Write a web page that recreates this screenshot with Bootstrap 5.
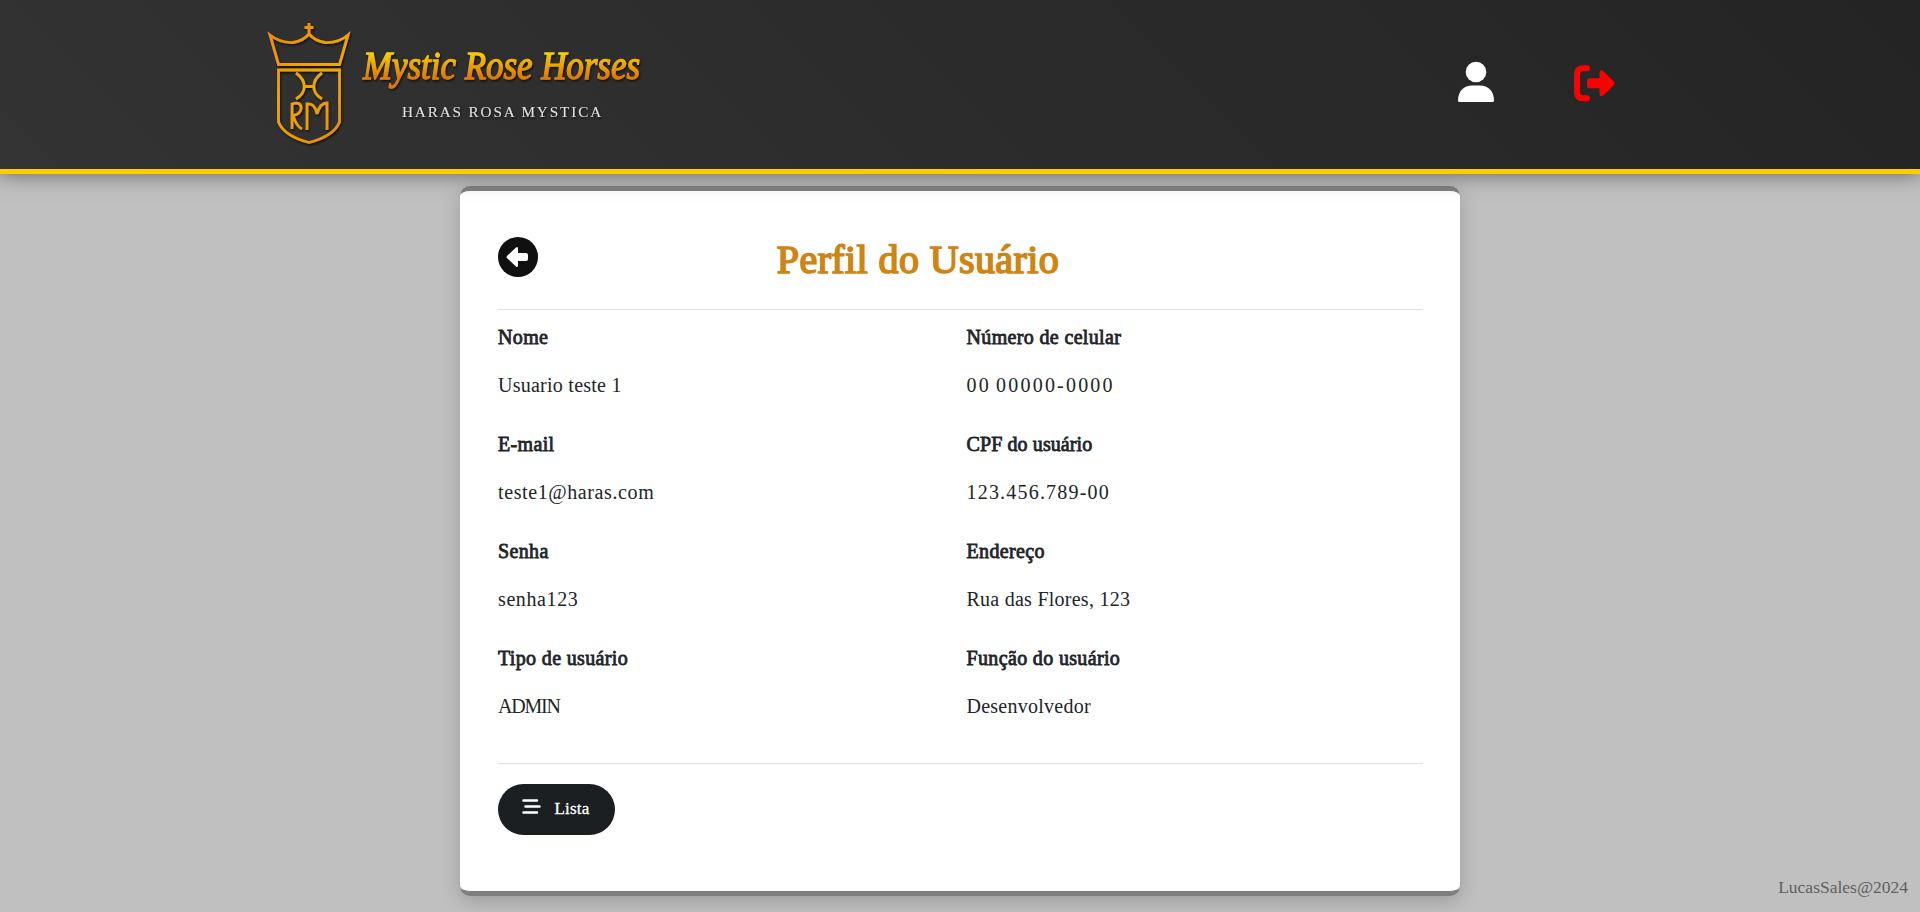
<!DOCTYPE html>
<html lang="pt-br">
<head>
<meta charset="utf-8">
<meta name="viewport" content="width=device-width, initial-scale=1">
<title>Perfil do Usuário</title>
<link href="https://cdn.jsdelivr.net/npm/bootstrap@5.3.0/dist/css/bootstrap.min.css" rel="stylesheet">
<style>
body{background:#c0c0c0;min-height:912px;font-family:"Liberation Serif",serif;overflow:hidden}
.site-header{height:174px;background:linear-gradient(45deg,#333,#242424);border-bottom:5px solid #fc0;box-shadow:0 0 20px rgba(0,0,0,.5);position:relative;padding-left:255px;padding-right:304px;z-index:0}
.site-header nav{gap:80px;padding-bottom:5px}
.site-header svg{overflow:visible}
.profile{width:1000px;height:710px;margin-top:12px;border:0;border-top:5px solid gray;border-bottom:5px solid gray;border-radius:10px;padding:0 37px 0 38px;box-shadow:0 5px 20px rgba(0,0,0,.2);z-index:-1}
main{position:relative;z-index:-1}
.title-bar{height:119px;border-bottom:1px solid #dee2e6;padding-top:13px}
.title-bar h1{color:#cf8512;font-size:40px;font-weight:400;-webkit-text-stroke:1.7px #cf8512;letter-spacing:.4px;margin:6px 125px 0 0;line-height:48px}
.field{height:107px;font-size:20px;line-height:30px}
.field dt{font-weight:400;-webkit-text-stroke:.8px #212529;letter-spacing:.35px;margin-top:-.5px}
.field dd{margin:18.5px 0 0;letter-spacing:.25px}
.field .ls-tight{letter-spacing:.1px}
.field .ls-caps{letter-spacing:-1.2px}
.field .ls-wide{letter-spacing:.6px}
.field .ls-digits{letter-spacing:1.2px}
.field .ls-phone{letter-spacing:2.2px;word-spacing:-2px}
.fields{--bs-gutter-x:12px;height:453px;padding-top:12px}
.actions{border-top:1px solid #dee2e6;padding-top:20px}
.btn-list{width:117px;height:51px;background:#1b1f22;color:#fff;font-size:17px;gap:14px;letter-spacing:.2px;padding:0 2px 2px 0;-webkit-text-stroke:.3px #fff}
.btn-list:hover{background:#1b1f22;color:#fff}
.credit{right:12px;bottom:13px;color:#5f5f5f;font-size:17.5px;line-height:24px}
</style>
</head>
<body>
<header class="site-header d-flex justify-content-between">
<svg width="400" height="169" viewBox="255 0 400 169" role="img" aria-label="Mystic Rose Horses">
<defs><linearGradient id="gold" x1="0" y1="0" x2="0" y2="1"><stop offset=".2" stop-color="#f8cf00"/><stop offset=".75" stop-color="#e07b00"/></linearGradient>
<linearGradient id="crest" gradientUnits="userSpaceOnUse" x1="268" y1="30" x2="350" y2="145"><stop offset="0" stop-color="#f08a08"/><stop offset=".45" stop-color="#f0a800"/><stop offset="1" stop-color="#e98a00"/></linearGradient>
<filter id="drop"><feDropShadow dx="1" dy="1.500" stdDeviation="1" flood-color="#000" flood-opacity=".75"/></filter></defs>
<g fill="none" stroke="url(#crest)" stroke-width="2.800" filter="url(#drop)">
<path d="M309 23v11M304.500 27.500h9M309 34Q303 41 293 42.500Q280 43 270 35L278.500 64.500H339.500L348 35Q339 43 325 42.500Q315 41 309 34Z"/>
<path d="M278.500 70H339.500V122Q334 136 309 142.500Q284 136 278.500 122Z"/>
<path d="M296 73C307 81 307 92 296 99M322 73C311 81 311 92 322 99M304 86.500H314M292 129V104C305 99 303 116 293 115Q296 126 302 129M307 130V104Q315 103 317 114Q320 103 327 103V130"/>
</g>
<text x="363" y="79" textLength="277" lengthAdjust="spacingAndGlyphs" font-family="Liberation Serif,serif" font-style="italic" font-size="39" fill="url(#gold)" stroke="url(#gold)" stroke-width="1.300" filter="url(#drop)">Mystic Rose Horses</text>
<text x="402" y="116.500" textLength="201" lengthAdjust="spacingAndGlyphs" font-family="Liberation Serif,serif" font-size="14.500" letter-spacing="1.800" fill="#e0e0e0" filter="url(#drop)">HARAS ROSA MYSTICA</text>
</svg>
<nav class="d-flex align-items-center">
<a href="#" aria-label="Perfil"><svg class="d-block" width="36" height="40" viewBox="0 0 36 40" fill="#fff"><circle cx="18" cy="10" r="10.300"/><path d="M0 38.500C0 29 6 23.500 14 23.500h8C30 23.500 36 29 36 38.500Q36 40 34.500 40H1.500Q0 40 0 38.500Z"/></svg></a>
<a href="#" class="pt-1" aria-label="Sair"><svg class="d-block" width="42" height="36" viewBox="0 0.800 42 36"><path d="M13 3H9Q3 3 3 9V27Q3 33 9 33H13" fill="none" stroke="red" stroke-width="6" stroke-linecap="round"/><path d="M15.500 13H25.500V7.500C25.500 4.500 28 4.500 30 6.500L39.500 16Q41.500 18 39.500 20L30 29.500C28 31.500 25.500 31.500 25.500 28.500V23H15.500Q13 23 13 20.500V15.500Q13 13 15.500 13Z" fill="red"/></svg></a>
</nav>
</header>
<main>
<section class="card profile mx-auto">
<div class="title-bar d-flex align-items-center justify-content-between">
<a href="#" aria-label="Voltar"><svg class="d-block" width="40" height="40" viewBox="0 0 40 40"><circle cx="20" cy="20" r="20" fill="#101010"/><path d="M9.200 21.300L18 29.500Q20 31 20 28V24H28Q30 24 30 22V18Q30 16 28 16H20V12Q20 9 18 10.500L9.200 18.700Q7.800 20 9.200 21.300Z" fill="#fff"/></svg></a>
<h1>Perfil do Usuário</h1><span></span>
</div>
<dl class="row fields align-content-start mb-0">
<div class="col-6 field"><dt>Nome</dt><dd>Usuario teste 1</dd></div>
<div class="col-6 field"><dt>Número de celular</dt><dd class="ls-phone">00 00000-0000</dd></div>
<div class="col-6 field"><dt>E-mail</dt><dd class="ls-wide">teste1@haras.com</dd></div>
<div class="col-6 field"><dt class="ls-tight">CPF do usuário</dt><dd class="ls-digits">123.456.789-00</dd></div>
<div class="col-6 field"><dt>Senha</dt><dd class="ls-wide">senha123</dd></div>
<div class="col-6 field"><dt>Endereço</dt><dd>Rua das Flores, 123</dd></div>
<div class="col-6 field"><dt>Tipo de usuário</dt><dd class="ls-caps">ADMIN</dd></div>
<div class="col-6 field"><dt>Função do usuário</dt><dd>Desenvolvedor</dd></div>
</dl>
<div class="actions"><button class="btn btn-list rounded-pill d-flex align-items-center justify-content-center"><svg class="mb-1" width="19" height="15" viewBox="0 0 19 15" fill="none" stroke="#fff" stroke-width="2.500" stroke-linecap="round"><path d="M1.500 1.500H15M3.500 7.500H17.500M1.500 13.500H15"/></svg><span>Lista</span></button></div>
</section>
</main>
<footer class="credit position-absolute">LucasSales@2024</footer>
<script src="https://cdn.jsdelivr.net/npm/bootstrap@5.3.0/dist/js/bootstrap.bundle.min.js"></script>
</body>
</html>
